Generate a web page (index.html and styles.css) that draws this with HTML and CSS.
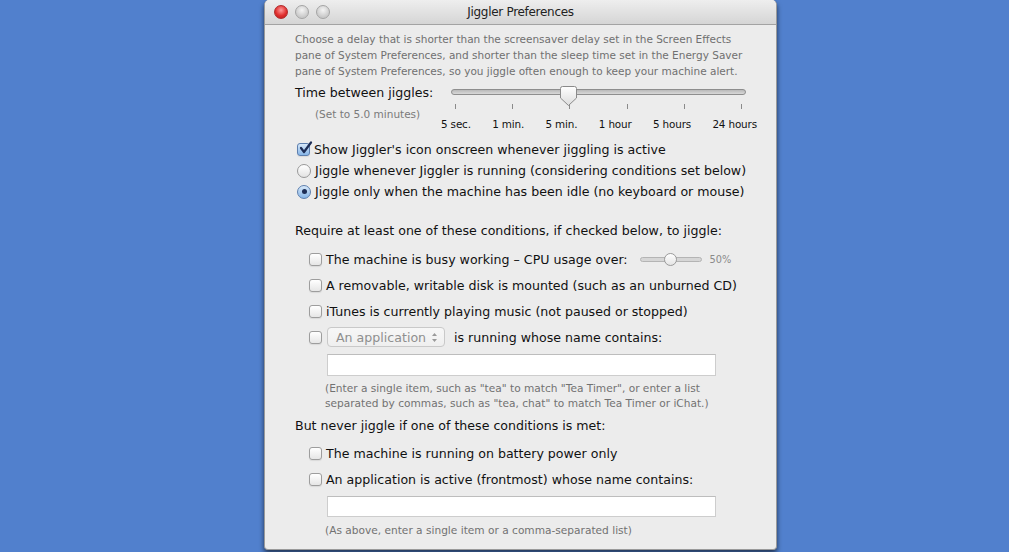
FILE: index.html
```html
<!DOCTYPE html>
<html lang="en">

<head>
    <meta charset="UTF-8">
    <title>Jiggler Preferences</title>
    <link rel="stylesheet" href="styles.css">
</head>

<body>
    <div class="window">
        <div class="titlebar">
            <div class="lights">
                <span class="light close"></span>
                <span class="light"></span>
                <span class="light"></span>
            </div>
            <div class="title">Jiggler Preferences</div>
        </div>

        <div class="content">
            <p class="desc">Choose a delay that is shorter than the screensaver delay set in the Screen Effects<br>pane of System Preferences, and shorter than the sleep time set in the Energy Saver<br>pane of System Preferences, so you jiggle often enough to keep your machine alert.</p>

            <div class="timing">
                <div class="timing-label">
                    <div class="line">Time between jiggles:</div>
                    <div class="note">(Set to 5.0 minutes)</div>
                </div>
                <div class="slider">
                    <div class="track-wrap">
                        <div class="track"></div>
                        <svg class="thumb" width="17" height="20" viewBox="0 0 17 20">
                            <defs>
                                <linearGradient id="tg" x1="0" y1="0" x2="0" y2="1">
                                    <stop offset="0" stop-color="#ffffff"/>
                                    <stop offset="1" stop-color="#dcdcdc"/>
                                </linearGradient>
                            </defs>
                            <path d="M2.5 0.5 H14.5 Q16.5 0.5 16.5 2.5 V12 L8.5 19.5 L0.5 12 V2.5 Q0.5 0.5 2.5 0.5 Z" fill="url(#tg)" stroke="#8a8a8a"/>
                        </svg>
                    </div>
                    <div class="ticks"><i></i><i></i><i></i><i></i><i></i><i></i></div>
                    <div class="tick-labels">
                        <span>5 sec.</span>
                        <span>1 min.</span>
                        <span>5 min.</span>
                        <span>1 hour</span>
                        <span>5 hours</span>
                        <span>24 hours</span>
                    </div>
                </div>
            </div>

            <div class="options">
                <div class="opt">
                    <span class="box checked">
                        <svg width="15" height="15" viewBox="0 0 15 15"><path d="M3 7 L6 11 L13 1.5" fill="none" stroke="#1d2d55" stroke-width="2.2" stroke-linecap="round" stroke-linejoin="round"/></svg>
                    </span>
                    Show Jiggler's icon onscreen whenever jiggling is active
                </div>
                <div class="opt"><span class="radio"></span>Jiggle whenever Jiggler is running (considering conditions set below)</div>
                <div class="opt"><span class="radio on"></span>Jiggle only when the machine has been idle (no keyboard or mouse)</div>
            </div>

            <div class="heading first">Require at least one of these conditions, if checked below, to jiggle:</div>
            <div class="conds">
                <div class="cond">
                    <span class="box"></span>The machine is busy working – CPU usage over:
                    <span class="mini-slider"><span class="mini-track"></span><span class="mini-thumb"></span></span>
                    <span class="pct">50%</span>
                </div>
                <div class="cond"><span class="box"></span>A removable, writable disk is mounted (such as an unburned CD)</div>
                <div class="cond"><span class="box"></span>iTunes is currently playing music (not paused or stopped)</div>
                <div class="cond">
                    <span class="box"></span>
                    <span class="popup">An application
                        <svg width="7" height="11" viewBox="0 0 7 11"><path d="M3.5 1 L6 4 H1 Z M3.5 10 L6 7 H1 Z" fill="#9a9a9a"/></svg>
                    </span>
                    is running whose name contains:
                </div>
            </div>
            <div class="field"></div>
            <p class="hint">(Enter a single item, such as "tea" to match "Tea Timer", or enter a list<br>separated by commas, such as "tea, chat" to match Tea Timer or iChat.)</p>

            <div class="heading">But never jiggle if one of these conditions is met:</div>
            <div class="conds second">
                <div class="cond"><span class="box"></span>The machine is running on battery power only</div>
                <div class="cond"><span class="box"></span>An application is active (frontmost) whose name contains:</div>
            </div>
            <div class="field second"></div>
            <p class="hint last">(As above, enter a single item or a comma-separated list)</p>
        </div>
    </div>
</body>

</html>
```

FILE: styles.css
```css
body {
    margin: 0;
    height: 552px;
    overflow: hidden;
    background-color: #5180cd;
    font-family: "DejaVu Sans", "Liberation Sans", sans-serif;
    color: #111;
}

.window {
    width: 511px;
    margin-left: 264px;
    background-color: #ececec;
    border: 1px solid #9a9a9a;
    border-top: none;
    border-radius: 5px 5px 4px 4px;
    box-shadow: 0 3px 5px rgba(0, 0, 0, 0.6);
    overflow: hidden;
}

.titlebar {
    height: 24px;
    display: flex;
    align-items: center;
    position: relative;
    background: linear-gradient(#eeeeee, #d5d5d5);
    border-bottom: 1px solid #a3a3a3;
}

.lights {
    display: flex;
    gap: 7px;
    padding-left: 9px;
}

.light {
    width: 12px;
    height: 12px;
    border-radius: 50%;
    border: 1px solid #a4a4a4;
    background: radial-gradient(circle at 50% 35%, #f4f4f4, #c9c9c9 70%);
}

.light.close {
    border-color: #b02a2a;
    background: radial-gradient(circle at 50% 35%, #ff9a9a, #e0302f 55%, #b51717);
}

.title {
    position: absolute;
    left: 0;
    right: 0;
    text-align: center;
    font-size: 12px;
    letter-spacing: -0.3px;
    color: #222;
}

.content {
    padding: 6px 0 11px 30px;
}

.desc {
    margin: 0;
    font-size: 10.5px;
    line-height: 16px;
    color: #707070;
}

.timing {
    display: grid;
    grid-template-columns: 146px 319px;
    margin-top: 6px;
}

.line,
.opt,
.heading,
.cond {
    font-size: 12.6px;
}

.line {
    line-height: 16px;
}

.note {
    margin-top: 5px;
    padding-left: 20px;
    font-size: 10.5px;
    line-height: 16px;
    color: #7a7a7a;
}

.track-wrap {
    position: relative;
    height: 14px;
}

.track {
    position: relative;
    top: 4px;
    height: 4px;
    margin: 0 14px 0 10px;
    border: 1px solid #8e8e8e;
    border-radius: 3px;
    background: linear-gradient(#b9b9b9, #d8d8d8);
}

.thumb {
    position: absolute;
    left: 119px;
    top: 1px;
}

.ticks {
    display: flex;
    justify-content: space-between;
    height: 5px;
    margin-top: 5px;
    padding: 0 18px 0 14px;
}

.ticks i {
    width: 1px;
    background-color: #8a8a8a;
}

.tick-labels {
    display: flex;
    justify-content: space-between;
    margin-top: 8px;
    padding-right: 3px;
    font-size: 10.4px;
    line-height: 14px;
    letter-spacing: -0.15px;
}

.options {
    margin-top: 8px;
}

.opt {
    display: flex;
    align-items: center;
    gap: 4px;
    height: 21px;
    padding-left: 2px;
}

.box {
    flex: none;
    position: relative;
    width: 11px;
    height: 11px;
    border: 1px solid #9d9d9d;
    border-radius: 3px;
    background: linear-gradient(#ffffff, #e6e6e6);
    box-shadow: 0 1px 1px rgba(0, 0, 0, 0.08);
}

.box.checked {
    border-color: #5d7fae;
    background: linear-gradient(#d7e8f9, #86b5e7);
}

.box.checked svg {
    position: absolute;
    left: 0;
    top: -3px;
}

.radio {
    flex: none;
    width: 12px;
    height: 12px;
    border: 1px solid #999;
    border-radius: 50%;
    background: linear-gradient(#ffffff, #e3e3e3);
    display: flex;
    align-items: center;
    justify-content: center;
}

.radio.on {
    border-color: #5d7fae;
    background: linear-gradient(#d7e8f9, #86b5e7);
}

.radio.on::after {
    content: "";
    width: 5px;
    height: 5px;
    border-radius: 50%;
    background-color: #1d2d55;
}

.heading {
    line-height: 16px;
    margin-top: 7px;
}

.heading.first {
    margin-top: 21px;
}

.conds {
    margin-top: 7px;
}

.conds.second {
    margin-top: 6px;
}

.cond {
    display: flex;
    align-items: center;
    height: 26px;
    padding-left: 14px;
}

.cond .box {
    margin-right: 4px;
}

.mini-slider {
    position: relative;
    width: 62px;
    height: 13px;
    margin-left: 12px;
    display: flex;
    align-items: center;
}

.mini-track {
    flex: 1;
    height: 3px;
    border: 1px solid #b4b4b4;
    border-radius: 3px;
    background-color: #d6d6d6;
}

.mini-thumb {
    position: absolute;
    left: 24px;
    top: 0;
    width: 11px;
    height: 11px;
    border: 1px solid #9a9a9a;
    border-radius: 50%;
    background: linear-gradient(#ffffff, #e4e4e4);
}

.pct {
    margin-left: 8px;
    font-size: 9.8px;
    color: #8a8a8a;
}

.popup {
    display: flex;
    align-items: center;
    justify-content: space-between;
    box-sizing: border-box;
    width: 118px;
    height: 20px;
    margin: 0 9px 0 1px;
    padding: 0 6px 0 8px;
    border: 1px solid #c9c9c9;
    border-radius: 4px;
    background: linear-gradient(#f7f7f7, #efefef);
    color: #8f8f8f;
}

.field {
    box-sizing: border-box;
    width: 389px;
    height: 22px;
    margin: 4px 0 0 32px;
    border: 1px solid #cdcdcd;
    border-top-color: #bdbdbd;
    background-color: #fff;
}

.field.second {
    height: 21px;
}

.hint {
    margin: 5px 0 0 30px;
    font-size: 10.6px;
    line-height: 15px;
    color: #727272;
}

.hint.last {
    margin-top: 6px;
}
```
